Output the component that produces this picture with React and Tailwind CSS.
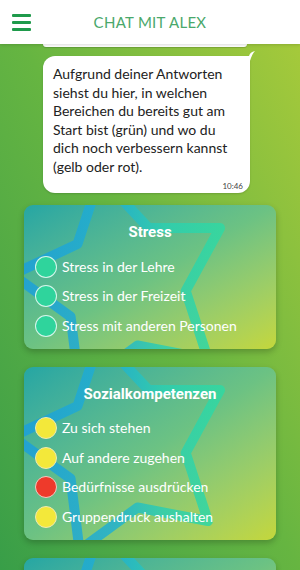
import React from 'react'

const Star = ({id}) => {
    // big rounded star behind card content
    const pts = "196,23 124.6,23 76,-29 53.5,39 -11.5,69.5 46.6,111.6 55.5,183 113.5,140.5 184,154 161.7,85.8"
    return (
        <svg className="absolute left-0 top-0 w-[252px] h-[180px] pointer-events-none" viewBox="0 0 252 180" fill="none">
            <defs>
                <linearGradient id={id} x1="0" y1="0" x2="200" y2="0" gradientUnits="userSpaceOnUse">
                    <stop offset="0" stopColor="#1c9fda" />
                    <stop offset="0.45" stopColor="#21b0d0" />
                    <stop offset="0.7" stopColor="#2ccfb0" />
                    <stop offset="1" stopColor="#30d9a2" />
                </linearGradient>
            </defs>
            <polygon points={pts} stroke={`url(#${id})`} strokeWidth="10" strokeLinejoin="round" opacity="0.85" />
        </svg>
    )
}

const dot = {
    green: "bg-[#2fd49c] border-white/80",
    yellow: "bg-[#f3e83a] border-[#efe9b0]",
    red: "bg-[#ee3a2b] border-[#f3c9c0]",
}

const Card = ({id, title, items}) => {
    return (
        <div className="relative overflow-hidden mx-[24px] mb-[18px] rounded-[9px] shadow-[0_3px_6px_rgba(0,0,0,0.22)] bg-linear-to-br from-[#24a6a4] via-[#6cc283] to-[#c4d73a]">
            <Star id={id} />
            <div className="relative pt-[17px] pb-[8px] pl-[11px]">
                <h2 className="text-center text-white text-[15px] font-bold leading-[20px] mb-[10px] pr-[11px]" style={{fontFamily: "Roboto, sans-serif"}}>{title}</h2>
                {items.map((it) => (
                    <div key={it.label} className="flex items-center h-[29.5px]">
                        <span className={"w-[22px] h-[22px] rounded-full border-[1.5px] shrink-0 " + dot[it.color]}></span>
                        <span className="ml-[5px] text-white text-[14px] leading-none">{it.label}</span>
                    </div>
                ))}
            </div>
        </div>
    )
}

export default function App() {
    return (
        <div className="w-[300px] h-[570px] overflow-hidden bg-linear-to-bl from-[#aacb3a] via-[#66b541] to-[#389e48]" style={{fontFamily: "Lato, 'Open Sans', sans-serif"}}>
            <div className="relative z-10 grid grid-cols-[44px_1fr_44px] items-center h-[44px] bg-white shadow-[0_1px_3px_rgba(0,0,0,0.15)]">
                <div className="flex flex-col gap-[4px] ml-[12px] w-[19px]">
                    <span className="h-[3px] bg-[#1f9a4b] rounded-[1px]"></span>
                    <span className="h-[3px] bg-[#1f9a4b] rounded-[1px]"></span>
                    <span className="h-[3px] bg-[#1f9a4b] rounded-[1px]"></span>
                </div>
                <h1 className="text-center text-[15px] tracking-[0.3px] text-[#4aa86b] leading-none">CHAT MIT ALEX</h1>
                <div></div>
            </div>

            <div className="ml-[43px] w-[204px] h-[3px] bg-white rounded-b-[6px] shadow-[0_1px_1px_rgba(0,0,0,0.15)]"></div>

            <div className="relative ml-[43px] w-[207px] mt-[9px] mb-[12px] bg-white rounded-[12px] rounded-tr-none pt-[9px] pl-[10px] pr-[6px] pb-[2px] shadow-[0_1px_2px_rgba(0,0,0,0.15)]">
                <svg className="absolute right-[-6px] top-[-5px] w-[7px] h-[10px]" viewBox="0 0 7 10">
                    <path d="M0 10 L0 5 Q1 1 6 0 Q3 3 1 10 Z" fill="#fff" />
                </svg>
                <p className="text-[14px] leading-[18.5px] text-[#222]">
                    Aufgrund deiner Antworten siehst du hier, in welchen Bereichen du bereits gut am Start bist (grün) und wo du dich noch verbessern kannst (gelb oder rot).
                </p>
                <div className="text-right text-[8px] leading-[10px] text-[#444] mt-[5px] pr-[1px]">10:46</div>
            </div>

            <Card id="s1" title="Stress" items={[
                {label: "Stress in der Lehre", color: "green"},
                {label: "Stress in der Freizeit", color: "green"},
                {label: "Stress mit anderen Personen", color: "green"},
            ]} />
            <Card id="s2" title="Sozialkompetenzen" items={[
                {label: "Zu sich stehen", color: "yellow"},
                {label: "Auf andere zugehen", color: "yellow"},
                {label: "Bedürfnisse ausdrücken", color: "red"},
                {label: "Gruppendruck aushalten", color: "yellow"},
            ]} />
            {/* next card, only its top edge is on screen */}
            <div className="relative overflow-hidden mx-[24px] h-[140px] rounded-[9px] shadow-[0_3px_6px_rgba(0,0,0,0.22)] bg-linear-to-br from-[#24a6a4] via-[#6cc283] to-[#c4d73a]">
                <Star id="s3" />
            </div>
        </div>
    )
}
